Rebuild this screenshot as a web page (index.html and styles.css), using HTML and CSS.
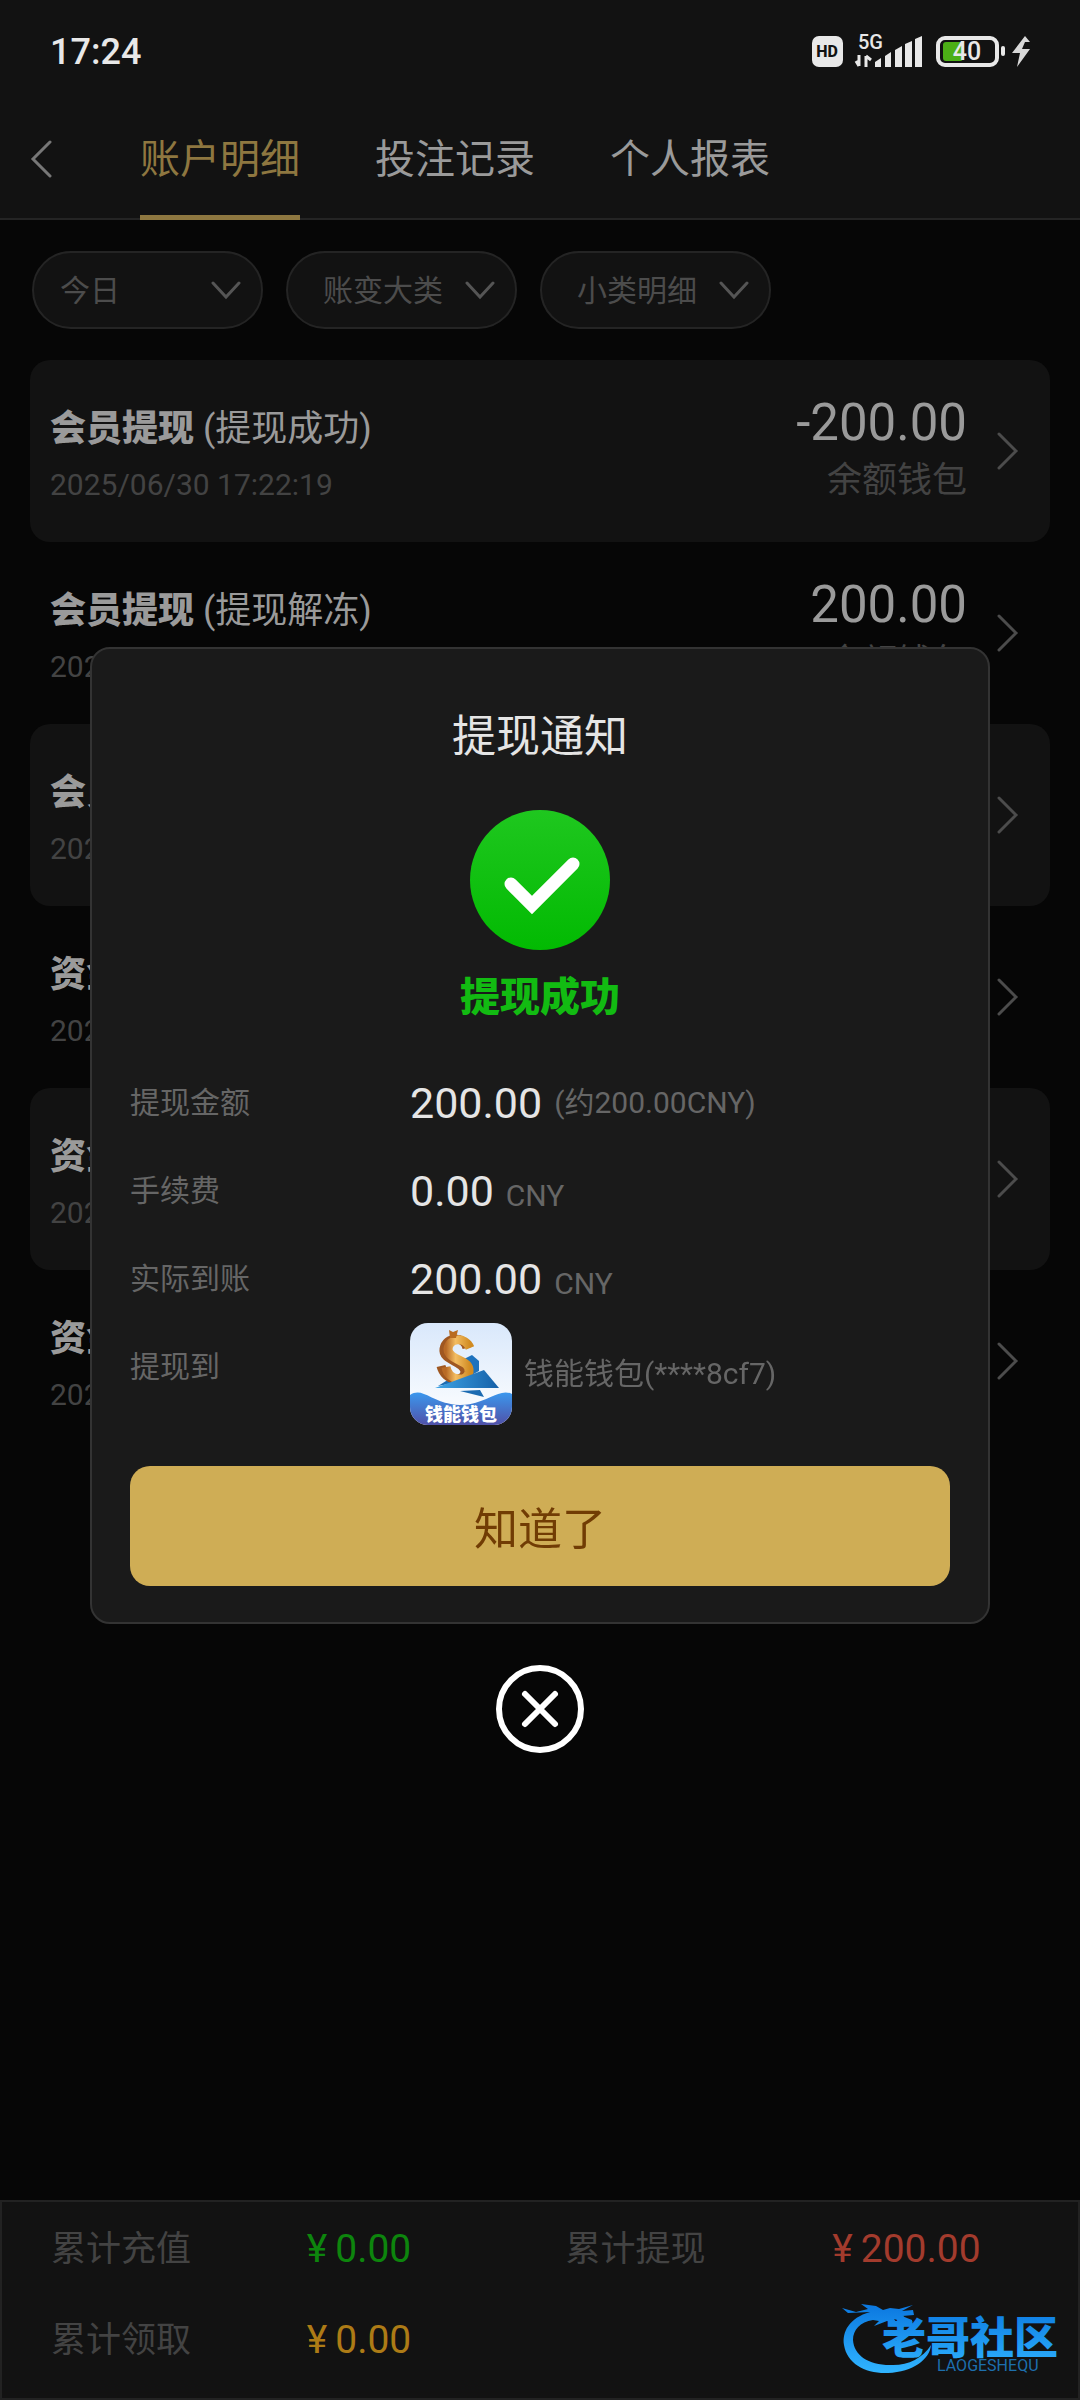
FILE: index.html
```html
<!DOCTYPE html>
<html lang="zh-CN">
<head>
    <meta charset="UTF-8">
    <meta name="viewport" content="width=device-width, initial-scale=1.0">
    <title>账户明细</title>
    <link rel="stylesheet" href="styles.css">
</head>
<body>

<div class="page">
    <div class="status-bar">
        <span class="clock">17:24</span>
        <svg class="status-icons" width="228" height="48" viewBox="808 28 228 48">
            <rect x="812" y="36" width="31" height="31" rx="7" fill="#e8e8e8"/>
            <text x="827" y="57" class="hd-text">HD</text>
            <text x="858" y="49" class="net-text">5G</text>
            <path d="M859 55v11M856 61l3 5M866 67v-11M871 60l-5-4" stroke="#e8e8e8" stroke-width="3" fill="none"/>
            <path d="M875 67v-5l6-4v9zM885 67v-11l6-4v15zM895 67v-17l7-4v21zM905 67v-23l7-3v26zM915 67v-28l7-3v31z" fill="#e8e8e8"/>
            <rect x="938" y="38" width="59" height="27" rx="7" fill="none" stroke="#e8e8e8" stroke-width="4"/>
            <rect x="943" y="42" width="20" height="19" rx="3" fill="#4caf16"/>
            <text x="967" y="60" class="battery-text">40</text>
            <rect x="1001" y="46" width="4" height="10" rx="2" fill="#e8e8e8"/>
            <path d="M1025 36l-13 17h8l-3 14 13-18h-8l3-7h5z" fill="#d8d8d8"/>
        </svg>
    </div>

    <nav class="nav">
        <button class="back" aria-label="返回">
            <svg width="22" height="38" viewBox="0 0 22 38"><path d="M20 2L3 19l17 17"/></svg>
        </button>
        <a href="#detail" class="tab active">账户明细</a>
        <a href="#bets" class="tab">投注记录</a>
        <a href="#report" class="tab">个人报表</a>
    </nav>

    <div class="filters">
        <div class="filter">
            <select class="date-select" aria-label="日期"><option>今日</option></select>
            <svg width="30" height="20" viewBox="0 0 30 20"><path d="M2 2l13 14L28 2"/></svg>
        </div>
        <div class="filter">
            <select aria-label="账变大类"><option>账变大类</option></select>
            <svg width="30" height="20" viewBox="0 0 30 20"><path d="M2 2l13 14L28 2"/></svg>
        </div>
        <div class="filter">
            <select aria-label="小类明细"><option>小类明细</option></select>
            <svg width="30" height="20" viewBox="0 0 30 20"><path d="M2 2l13 14L28 2"/></svg>
        </div>
    </div>

    <main class="list">
        <div class="record">
            <div class="info">
                <div class="name"><b>会员提现</b> (提现成功)</div>
                <div class="time">2025/06/30 17:22:19</div>
            </div>
            <div class="money">
                <div class="amount">-200.00</div>
                <div class="wallet">余额钱包</div>
            </div>
            <svg class="arrow" width="22" height="38" viewBox="0 0 22 38"><path d="M2 2l17 17L2 36"/></svg>
        </div>
        <div class="record">
            <div class="info">
                <div class="name"><b>会员提现</b> (提现解冻)</div>
                <div class="time">2025/06/30 17:22:19</div>
            </div>
            <div class="money">
                <div class="amount">200.00</div>
                <div class="wallet">余额钱包</div>
            </div>
            <svg class="arrow" width="22" height="38" viewBox="0 0 22 38"><path d="M2 2l17 17L2 36"/></svg>
        </div>
        <div class="record">
            <div class="info">
                <div class="name"><b>会员提现</b></div>
                <div class="time">2025/06/30</div>
            </div>
            <svg class="arrow" width="22" height="38" viewBox="0 0 22 38"><path d="M2 2l17 17L2 36"/></svg>
        </div>
        <div class="record">
            <div class="info">
                <div class="name"><b>资金</b></div>
                <div class="time">2025/06/30</div>
            </div>
            <svg class="arrow" width="22" height="38" viewBox="0 0 22 38"><path d="M2 2l17 17L2 36"/></svg>
        </div>
        <div class="record">
            <div class="info">
                <div class="name"><b>资金</b></div>
                <div class="time">2025/06/30</div>
            </div>
            <svg class="arrow" width="22" height="38" viewBox="0 0 22 38"><path d="M2 2l17 17L2 36"/></svg>
        </div>
        <div class="record">
            <div class="info">
                <div class="name"><b>资金</b></div>
                <div class="time">2025/06/30</div>
            </div>
            <svg class="arrow" width="22" height="38" viewBox="0 0 22 38"><path d="M2 2l17 17L2 36"/></svg>
        </div>
    </main>

    <footer class="totals">
        <span>累计充值</span>
        <span class="sum green"><i>¥</i>0.00</span>
        <span>累计提现</span>
        <span class="sum red"><i>¥</i>200.00</span>
        <span>累计领取</span>
        <span class="sum orange"><i>¥</i>0.00</span>
        <svg class="community" width="232" height="80" viewBox="836 2298 232 80">
            <defs>
                <linearGradient id="blue" x1="0" y1="2305" x2="0" y2="2372" gradientUnits="userSpaceOnUse">
                    <stop offset="0" stop-color="#0b78e0"/>
                    <stop offset="1" stop-color="#30b4ff"/>
                </linearGradient>
            </defs>
            <path fill="url(#blue)" d="M870 2312C849 2318 842 2332 844 2345C847 2364 866 2374 888 2373C913 2372 930 2359 931 2345C922 2359 907 2366 890 2365C868 2365 854 2355 853 2340C853 2330 860 2322 873 2320L879 2321L874 2326L887 2321L897 2323L894 2319L912 2324L912 2320L902 2316L914 2315L913 2310L902 2311L913 2305L899 2309L890 2308L883 2310L876 2306L861 2304L868 2309L856 2312L842 2308L848 2313Z"/>
            <text x="882" y="2354" class="community-name" fill="url(#blue)">老哥社区</text>
            <text x="937" y="2371" class="community-sub">LAOGESHEQU</text>
        </svg>
    </footer>
</div>

<div class="overlay">
    <div class="dialog" role="dialog" aria-labelledby="dialogTitle">
        <h2 id="dialogTitle">提现通知</h2>
        <svg class="check" width="140" height="140" viewBox="0 0 140 140">
            <defs>
                <linearGradient id="green" x1="0" y1="0" x2="0" y2="1">
                    <stop offset="0" stop-color="#1fc71f"/>
                    <stop offset="1" stop-color="#02ba02"/>
                </linearGradient>
            </defs>
            <circle cx="70" cy="70" r="70" fill="url(#green)"/>
            <path d="M41 74l21 21 41-41" fill="none" stroke="#fff" stroke-width="13" stroke-linecap="round"/>
        </svg>
        <p class="result">提现成功</p>
        <dl class="details">
            <div class="line">
                <dt>提现金额</dt>
                <dd class="middle"><strong>200.00</strong><span>(约200.00CNY)</span></dd>
            </div>
            <div class="line">
                <dt>手续费</dt>
                <dd><strong>0.00</strong><span>CNY</span></dd>
            </div>
            <div class="line">
                <dt>实际到账</dt>
                <dd><strong>200.00</strong><span>CNY</span></dd>
            </div>
            <div class="line account">
                <dt>提现到</dt>
                <dd class="middle">
                    <svg class="wallet-logo" width="102" height="102" viewBox="0 0 102 102">
                        <defs>
                            <linearGradient id="sky" x1="0" y1="0" x2="0" y2="1">
                                <stop offset="0" stop-color="#d9e8fb"/>
                                <stop offset="1" stop-color="#fff"/>
                            </linearGradient>
                            <linearGradient id="wave" x1="0" y1="0" x2="0" y2="1">
                                <stop offset="0" stop-color="#3b98ee"/>
                                <stop offset="1" stop-color="#5051a8"/>
                            </linearGradient>
                            <linearGradient id="gold" x1="0" y1="0" x2="1" y2="0">
                                <stop offset="0" stop-color="#b86a26"/>
                                <stop offset="0.4" stop-color="#f3bd62"/>
                                <stop offset="1" stop-color="#d18b22"/>
                            </linearGradient>
                            <linearGradient id="plane" x1="0" y1="0" x2="1" y2="0">
                                <stop offset="0" stop-color="#3fa4e6"/>
                                <stop offset="1" stop-color="#1560a8"/>
                            </linearGradient>
                        </defs>
                        <rect width="102" height="102" fill="url(#sky)"/>
                        <path d="M54 36l8-4 7 6v10l-9 5-8-1z" fill="#1d72bd"/>
                        <path d="M28 63l16-10 5 6zM50 68l24 6-4-7z" fill="#1c6bb2"/>
                        <path d="M57 25C54 13 36 13 34 26C32 38 55 38 55 49C54 60 35 59 31 43" fill="none" stroke="#9f5721" stroke-width="9"/>
                        <path d="M60 25C55 13 39 15 38 26C38 38 61 36 59 49C57 60 38 58 36 44" fill="none" stroke="url(#gold)" stroke-width="9"/>
                        <path d="M39 7l4 2 5-2-2 8h-6z" fill="#b96b20"/>
                        <path d="M25 65l49-18 15 18z" fill="url(#plane)"/>
                        <path d="M0 72C13 63 22 81 50 82C75 82 89 64 102 71V102H0z" fill="url(#wave)"/>
                        <text x="51" y="98" class="logo-text">钱能钱包</text>
                    </svg>
                    <span>钱能钱包(****8cf7)</span>
                </dd>
            </div>
        </dl>
        <button class="confirm">知道了</button>
    </div>
    <button class="close" aria-label="关闭">
        <svg width="88" height="88" viewBox="0 0 88 88">
            <circle cx="44" cy="44" r="41" fill="none" stroke="#fff" stroke-width="6"/>
            <path d="M29 29l30 30M59 29L29 59" stroke="#fff" stroke-width="6" stroke-linecap="round"/>
        </svg>
    </button>
</div>

</body>
</html>
```
FILE: styles.css
```css
* {
    box-sizing: border-box;
}
body {
    margin: 0;
    background-color: #060606;
    color: #9a9a9a;
    font-family: Roboto, 'Noto Sans CJK SC', sans-serif;
}
button {
    padding: 0;
    border: none;
    background: none;
    font-family: inherit;
    cursor: pointer;
}
svg {
    display: block;
    flex-shrink: 0;
}
.page {
    display: flex;
    flex-direction: column;
    min-height: 100vh;
}

/* Status bar */
.status-bar {
    display: flex;
    justify-content: space-between;
    align-items: center;
    height: 96px;
    padding: 8px 44px 0 50px;
    background-color: #121212;
}
.clock {
    color: #e8e8e8;
    font-size: 36px;
    font-weight: 500;
}
.hd-text {
    font-size: 16px;
    font-weight: 800;
    text-anchor: middle;
    fill: #121212;
}
.net-text {
    font-size: 20px;
    font-weight: 500;
    fill: #e8e8e8;
}
.battery-text {
    font-size: 25px;
    font-weight: 500;
    text-anchor: middle;
    fill: #e8e8e8;
}

/* Tabs */
.nav {
    display: flex;
    gap: 75px;
    height: 124px;
    padding: 4px 0 0 30px;
    background-color: #121212;
    border-bottom: 2px solid #242424;
}
.back {
    margin-right: 13px;
}
.back path,
.filter path,
.arrow path {
    fill: none;
    stroke: #777;
    stroke-width: 3;
    stroke-linecap: round;
}
.tab {
    margin-bottom: -2px;
    color: #9a9a9a;
    font-size: 40px;
    line-height: 120px;
    text-decoration: none;
}
.tab.active {
    color: #8e7740;
    box-shadow: inset 0 -5px #8e7740;
}

/* Filters */
.filters {
    display: flex;
    gap: 23px;
    padding: 31px 32px;
}
.filter {
    position: relative;
    width: 231px;
}
.filter select {
    width: 100%;
    height: 78px;
    padding: 0 0 0 35px;
    appearance: none;
    background-color: #121212;
    border: 2px solid #242424;
    border-radius: 39px;
    color: #4c4c4c;
    font-family: inherit;
    font-size: 30px;
}
.filter .date-select {
    padding-left: 26px;
}
.filter svg {
    position: absolute;
    top: 30px;
    right: 22px;
    pointer-events: none;
}
.filter path {
    stroke: #555;
}

/* Records */
.list {
    flex: 1;
    padding: 0 30px;
}
.record {
    display: flex;
    align-items: center;
    height: 182px;
    padding: 0 31px 0 20px;
    border-radius: 20px;
}
.record:nth-child(odd) {
    background-color: #121212;
}
.info {
    flex: 1;
    padding-top: 12px;
}
.name {
    margin-bottom: 8px;
    font-size: 36px;
    line-height: 48px;
}
.name b {
    font-weight: 900;
}
.time {
    color: #434343;
    font-size: 30px;
    line-height: 48px;
}
.money {
    padding-top: 2px;
    text-align: right;
}
.amount {
    font-size: 51px;
    line-height: 58px;
}
.wallet {
    color: #434343;
    font-size: 35px;
    line-height: 58px;
}
.arrow {
    margin-left: 30px;
}
.arrow path {
    stroke: #4c4c4c;
}

/* Totals */
.totals {
    position: relative;
    display: grid;
    grid-template-columns: 256fr 259fr 267fr 246fr;
    padding: 2px 0 12px 49px;
    background-color: #121212;
    border: 2px solid #222;
    color: #434343;
    font-size: 35px;
    line-height: 91px;
}
.sum {
    font-size: 39px;
}
.sum i {
    margin-right: 8px;
    font-style: normal;
}
.green {
    color: #0d850d;
}
.red {
    color: #a33b2d;
}
.orange {
    color: #ad7b16;
}
.community {
    position: absolute;
    right: 10px;
    bottom: 20px;
}
.community-name {
    font-size: 44px;
    font-weight: 900;
}
.community-sub {
    font-size: 16px;
    fill: #1d6fae;
}

/* Withdrawal dialog */
.overlay {
    position: fixed;
    inset: 0;
    display: flex;
    flex-direction: column;
    align-items: center;
    justify-content: center;
    gap: 41px;
}
.dialog {
    display: flex;
    flex-direction: column;
    align-items: center;
    width: calc(100% - 180px);
    padding: 58px 38px 36px;
    background-color: #1a1a1a;
    border: 2px solid #333;
    border-radius: 20px;
}
.dialog h2 {
    margin: 0 0 43px;
    color: #e5e5e5;
    font-size: 44px;
    font-weight: 400;
    line-height: 60px;
}
.result {
    margin: 20px 0 33px;
    color: #12bb12;
    font-size: 40px;
    font-weight: 900;
    line-height: 56px;
}
.details {
    width: 100%;
    margin: 0 0 41px;
    color: #666;
    font-size: 30px;
    line-height: 88px;
}
.line {
    display: flex;
    height: 88px;
}
.line.account {
    height: 102px;
}
.line dt {
    width: 280px;
}
.line dd {
    display: flex;
    align-items: baseline;
    gap: 12px;
    margin: 0;
}
.line .middle {
    align-items: center;
}
.line strong {
    color: #e5e5e5;
    font-size: 43px;
    font-weight: 400;
}
.wallet-logo {
    border-radius: 18px;
}
.logo-text {
    font-size: 18px;
    font-weight: 900;
    text-anchor: middle;
    fill: #fff;
}
.confirm {
    width: 100%;
    height: 120px;
    background-color: #cfad55;
    border-radius: 20px;
    color: #713c04;
    font-size: 44px;
}
```
